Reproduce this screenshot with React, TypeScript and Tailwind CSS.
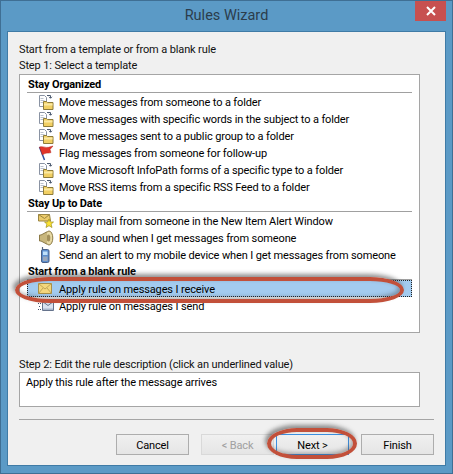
import type { ReactNode } from "react";

function MoveIcon() {
  return (
    <svg width="16" height="16" viewBox="0 0 16 16" className="shrink-0">
      <path d="M1.5 1.5h5l2 2v9h-7z" fill="#fff" stroke="#8a93a3" />
      <path d="M2.5 4.5h3M2.5 6.5h4M2.5 8.5h4" stroke="#b9c0cc" />
      <path d="M9 1.5h3.5v2.5M11 2.8l1.5 1.5 1.5-1.5" fill="none" stroke="#4c5a70" />
      <path d="M5.5 7.5h3l1 1h5.5v7h-9.5z" fill="#f1cf63" stroke="#8d7b3a" />
      <path d="M6 9.5h8.5v2h-8.5z" fill="#fbe9a4" />
    </svg>
  );
}

function FlagIcon() {
  return (
    <svg width="16" height="16" viewBox="0 0 16 16" className="shrink-0">
      <path d="M1.5 2l5 13" stroke="#2f4f9e" strokeWidth="1.5" />
      <path d="M1.5 2c3-1.2 6 1 9 .3l4.5-1.3-3 3.5 1 3c-3 1.3-5-.5-8.5 2.5z" fill="#e0342a" stroke="#b3241c" strokeWidth=".5" />
    </svg>
  );
}

function MailStarIcon() {
  return (
    <svg width="16" height="16" viewBox="0 0 16 16" className="shrink-0">
      <path d="M.5 1.5h11l1 6.5h-12z" fill="#eccb6a" stroke="#9b8540" />
      <path d="M.5 1.5l6 4 5-4" fill="none" stroke="#9b8540" />
      <path d="M11 6l1.4 3h3.1l-2.4 2.1.9 3.4-3-1.8-3 1.8.9-3.4-2.4-2.1h3.1z" fill="#fbe233" stroke="#9d8f1e" strokeWidth=".7" />
    </svg>
  );
}

function SpeakerIcon() {
  return (
    <svg width="16" height="16" viewBox="0 0 16 16" className="shrink-0">
      <ellipse cx="11" cy="8" rx="3.8" ry="7" fill="#e7d9a4" stroke="#8c7a47" />
      <ellipse cx="10.5" cy="8" rx="1.8" ry="3.5" fill="#a3905b" />
      <path d="M9 1.8L3 5H1.5v6H3l6 3.2" fill="#c8b67c" stroke="#8c7a47" />
    </svg>
  );
}

function PhoneIcon() {
  return (
    <svg width="16" height="16" viewBox="0 0 16 16" className="shrink-0">
      <path d="M4.5 0v3" stroke="#56647c" strokeWidth="1.2" />
      <rect x="3.5" y="2.5" width="7.5" height="13" rx="1.5" fill="#5d8fce" stroke="#4a5f86" />
      <rect x="5" y="4.5" width="4.5" height="3.5" fill="#bfe0fa" />
      <rect x="5" y="9.5" width="4.5" height="4.5" fill="#9aa7bb" />
    </svg>
  );
}

function MailIcon() {
  return (
    <svg width="16" height="16" viewBox="0 0 16 16" className="shrink-0">
      <path d="M.5 2.5h13v10h-13z" fill="#f4d67b" stroke="#a8904a" />
      <path d="M.5 2.5l6.5 5.5 6.5-5.5M.5 12.5l4.5-5.5M13.5 12.5l-4.5-5.5" fill="none" stroke="#c2a657" />
    </svg>
  );
}

function SendIcon() {
  return (
    <svg width="16" height="16" viewBox="0 0 16 16" className="shrink-0">
      <path d="M0 5.5h3M1 8.5h2M0 11.5h3" stroke="#3f4f6c" strokeDasharray="1 1" />
      <path d="M4.5 3.5h11v9h-11z" fill="#d9e2ef" stroke="#65738c" />
      <path d="M4.5 3.5l5.5 4 5.5-4" fill="none" stroke="#65738c" />
      <path d="M5 10.5h10v1.5h-10z" fill="#a9b7cc" />
    </svg>
  );
}

function Heading({ children }: { children: ReactNode }) {
  return (
    <div className="mx-[7px] h-[17px] border-b border-[#a0a0a0] pl-px font-bold leading-[17px] text-black">
      {children}
    </div>
  );
}

function Row({ icon, text }: { icon: ReactNode; text: string }) {
  return (
    <div className="ml-[18px] flex h-[17px] items-center gap-[5px] text-black">
      {icon}
      <span className="whitespace-nowrap pt-[2px]">{text}</span>
    </div>
  );
}

function Btn({ label, disabled, focused }: { label: string; disabled?: boolean; focused?: boolean }) {
  return (
    <div
      className={`flex h-[21px] w-[73px] items-center justify-center border bg-gradient-to-b from-[#f0f0f0] to-[#e5e5e5] pt-[3px] ${
        disabled
          ? "border-[#d9d9d9] text-[#a0a0a0]"
          : focused
            ? "border-[#3c8fe0] text-black"
            : "border-[#adadad] text-black"
      }`}
    >
      {label}
    </div>
  );
}

export default function App() {
  return (
    <div className="relative flex h-[474px] w-[453px] flex-col overflow-hidden border border-[#3f6f94] bg-[#5b9ac6] font-['Roboto',sans-serif] text-[11px] leading-[16px] tracking-[-0.13px] text-[#111]">
      <div className="h-[30px] shrink-0 pt-[4px] text-center text-[14.5px] leading-[22px] tracking-normal text-[#2b3d4c]">Rules Wizard</div>
      <div className="absolute right-[6px] top-0 flex h-[20px] w-[31px] items-center justify-center bg-[#c75050]">
        <svg width="10" height="10" viewBox="0 0 10 10">
          <path d="M1 1l8 8M9 1l-8 8" stroke="#fff" strokeWidth="2" />
        </svg>
      </div>

      <div className="mx-[6px] flex h-[435px] flex-col border border-[#3f7ba6] bg-[#f0f0f0] pl-[11px] pr-[10px]">
        <div className="mt-[10px] h-[16px]">Start from a template or from a blank rule</div>
        <div className="h-[15px]">Step 1: Select a template</div>
        <div className="mt-px h-[259px] w-[401px] border border-[#a5a5a5] bg-white pt-[1px]">
          <Heading>Stay Organized</Heading>
          <Row icon={<MoveIcon />} text="Move messages from someone to a folder" />
          <Row icon={<MoveIcon />} text="Move messages with specific words in the subject to a folder" />
          <Row icon={<MoveIcon />} text="Move messages sent to a public group to a folder" />
          <Row icon={<FlagIcon />} text="Flag messages from someone for follow-up" />
          <Row icon={<MoveIcon />} text="Move Microsoft InfoPath forms of a specific type to a folder" />
          <Row icon={<MoveIcon />} text="Move RSS items from a specific RSS Feed to a folder" />
          <Heading>Stay Up to Date</Heading>
          <Row icon={<MailStarIcon />} text="Display mail from someone in the New Item Alert Window" />
          <Row icon={<SpeakerIcon />} text="Play a sound when I get messages from someone" />
          <Row icon={<PhoneIcon />} text="Send an alert to my mobile device when I get messages from someone" />
          <Heading>Start from a blank rule</Heading>
          <div className="mx-[7px] flex h-[17px] items-center gap-[5px] border border-dotted border-[#222] bg-[#a3cbef] pl-[10px] text-black">
            <MailIcon />
            <span className="pt-[2px]">Apply rule on messages I receive</span>
          </div>
          <Row icon={<SendIcon />} text="Apply rule on messages I send" />
        </div>
        <div className="mt-[24px] h-[15px]">Step 2: Edit the rule description (click an underlined value)</div>
        <div className="h-[35px] w-[401px] border border-[#a5a5a5] bg-white pl-[6px] pt-[2px] text-black">
          Apply this rule after the message arrives
        </div>
        <div className="mt-[12px] h-px w-[415px] bg-[#a5a5a5]" />
        <div className="mt-[14px] flex w-[415px] justify-end">
          <Btn label="Cancel" />
          <div className="ml-[12px]">
            <Btn label="< Back" disabled />
          </div>
          <div className="ml-[2px]">
            <Btn label="Next >" focused />
          </div>
          <div className="ml-[12px]">
            <Btn label="Finish" />
          </div>
        </div>
      </div>

      {/* hand-drawn callout rings on top of the dialog */}
      <div className="pointer-events-none absolute left-[14px] top-[276px] h-[26px] w-[389px] rounded-[34px/13px] border-[4px] border-[#c2503a] shadow-[-2px_-3px_4px_rgba(60,60,60,0.55),inset_-2px_-2px_4px_rgba(60,60,60,0.4)]" />
      <div className="pointer-events-none absolute left-[266px] top-[427px] h-[31px] w-[90px] rounded-[30px/15.5px] border-[4px] border-[#c2503a] shadow-[-2px_-3px_4px_rgba(60,60,60,0.55),inset_-2px_-2px_4px_rgba(60,60,60,0.4)]" />
    </div>
  );
}
